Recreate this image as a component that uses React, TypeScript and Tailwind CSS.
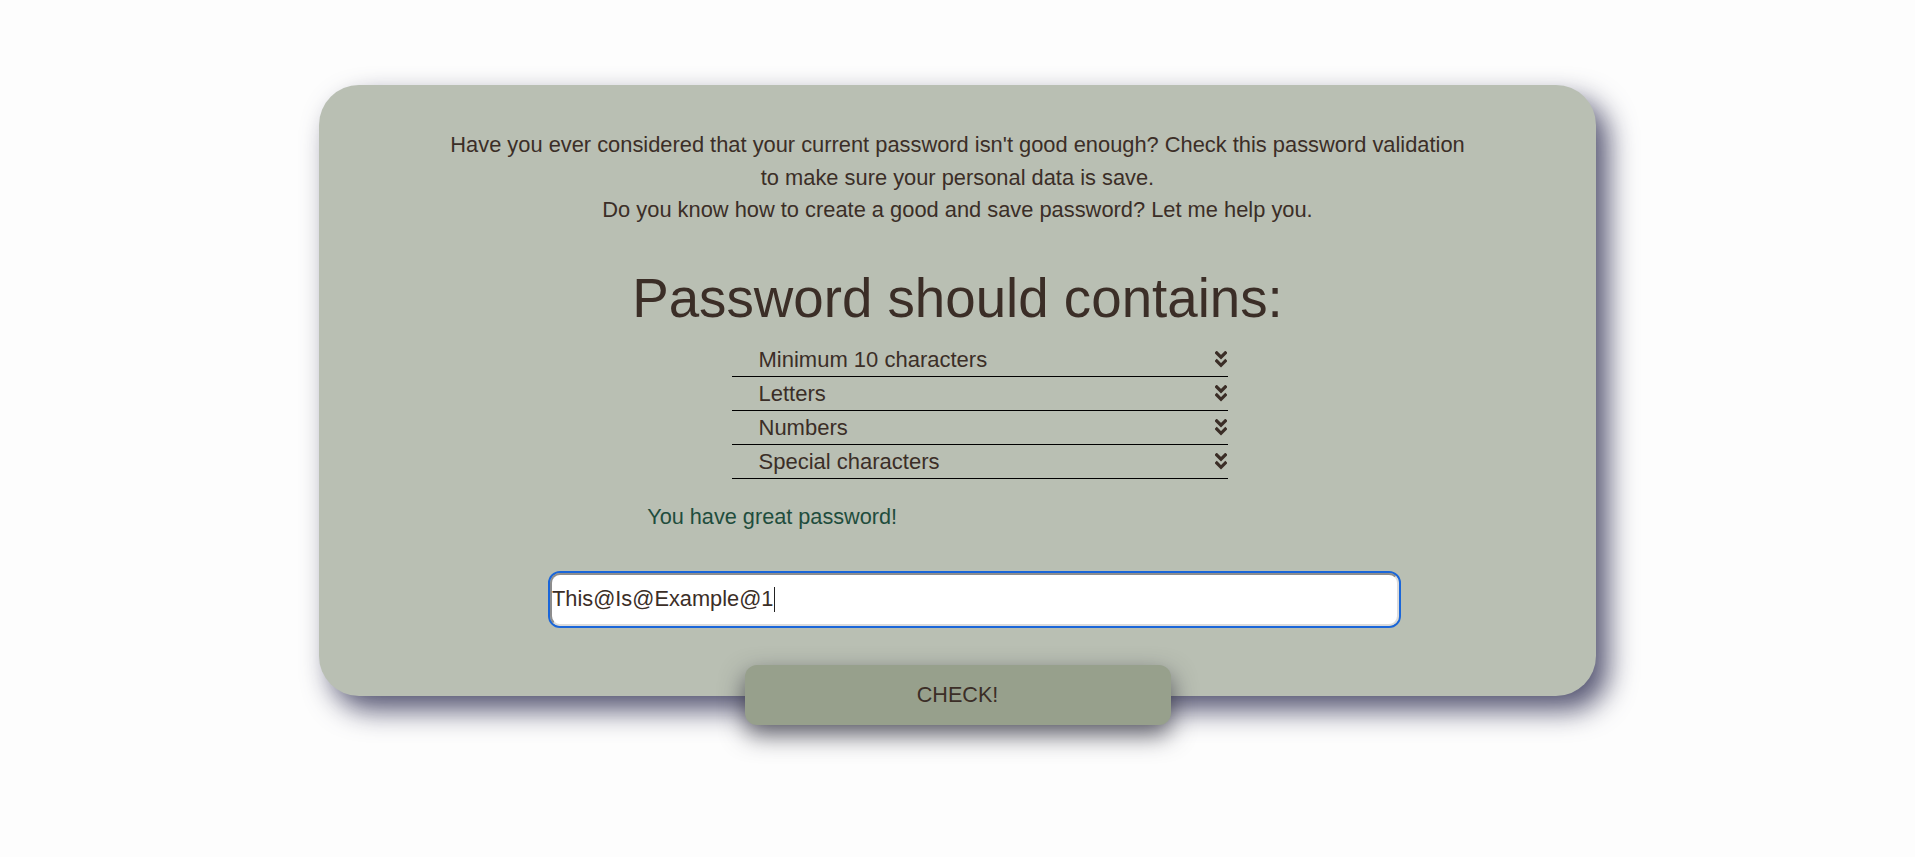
import React from 'react'

const rules = ['Minimum 10 characters', 'Letters', 'Numbers', 'Special characters']

function DoubleChevron() {
  return (
    <svg width="12" height="17" viewBox="0 0 12 17" fill="none" stroke="#3b2e27" strokeWidth="3.2" strokeLinecap="square">
      <path d="M1.7 1.9 L6 6.2 L10.3 1.9" />
      <path d="M1.7 10 L6 14.3 L10.3 10" />
    </svg>
  )
}

export default function App() {
  return (
    <div className="min-h-screen bg-[#fdfdfd] pt-[85px] font-['Liberation_Sans',Arial,sans-serif] text-[#3b2e27]">
      <div className="w-2/3 mx-auto bg-[#b9bfb3] rounded-[40px] shadow-[12px_14px_28px_rgba(75,75,105,0.95)] flex flex-col items-center pt-[44px]">
        <p className="text-[21.85px] leading-[32.5px] text-center">
          Have you ever considered that your current password isn't good enough? Check this password validation
          <br />
          to make sure your personal data is save.
          <br />
          Do you know how to create a good and save password? Let me help you.
        </p>

        <h1 className="mt-[40px] text-[54.7px] leading-[62px]">Password should contains:</h1>

        <ul className="mt-[14px] w-[496px] ml-[44px]">
          {rules.map((rule) => (
            <li key={rule} className="h-[34px] border-b border-black flex items-center justify-between pl-[27px] pr-[1px] text-[22px]">
              <span>{rule}</span>
              <DoubleChevron />
            </li>
          ))}
        </ul>

        <p className="self-stretch mt-[21px] pl-[328px] text-[21.7px] leading-[33px] text-[#1f4d3d]">
          You have great password!
        </p>

        <div className="mt-[38px] ml-[34px] w-[853px] h-[57px] rounded-[12px] border-2 border-[#1a66d9]">
          <div className="h-full rounded-[10px] bg-white border-2 border-t-[#8d8d8d] border-l-[#8d8d8d] border-r-[#dcdcdc] border-b-[#dcdcdc] flex items-center text-[21.8px] text-[#3b2e27]">
            <span>This@Is@Example@1</span>
            <span className="w-px h-[25px] bg-[#222] ml-px" />
          </div>
        </div>

        <button className="mt-[37px] mb-[-29px] w-[426px] h-[60px] rounded-[12px] bg-[#97a08c] pt-[2px] text-[21.6px] text-[#3b2e27] shadow-[0_10px_25px_rgba(35,35,50,0.7)]">
          CHECK!
        </button>
      </div>
    </div>
  )
}
